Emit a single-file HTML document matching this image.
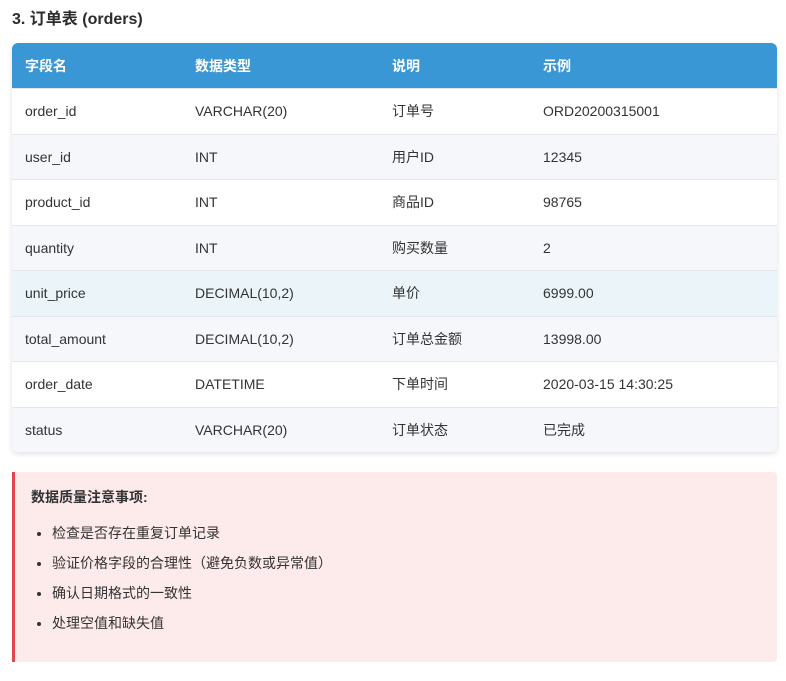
<!DOCTYPE html>
<html><head><meta charset="utf-8"><style>
body{margin:0;background:#fff;font-family:"Liberation Sans","Noto Sans CJK SC",sans-serif;color:#333;width:786px;height:681px;overflow:hidden}
h3{position:absolute;left:12px;top:9px;margin:0;font-size:16px;font-weight:bold;color:#2c2c2c;line-height:22px}
table{position:absolute;left:12px;top:43px;width:765px;border-collapse:collapse;border-radius:6px;overflow:hidden;box-shadow:0 2px 6px rgba(0,0,0,.12);font-size:14px}
th{background:#3a97d6;color:#fff;text-align:left;font-weight:bold;height:45px;padding:0 13px}
td{height:44.5px;padding:0 13px;border-top:1px solid #e3e6ea;background:#fff}
tr:nth-child(odd) td{background:#f5f7fa}
tr.hl td{background:#ebf5f9}
.note{position:absolute;left:12px;top:472px;width:762px;height:190px;background:#fdeaea;border-left:3px solid #e0464a;border-radius:0 4px 4px 0;font-size:14px}
.note b{position:absolute;left:16px;top:15px}
.note ul{position:absolute;left:0;top:51px;margin:0;padding-left:37px}
.note li{height:30px;line-height:20px}
</style></head><body>
<h3>3. 订单表 (orders)</h3>
<table>
<tr><th style="width:144px">字段名</th><th style="width:171px">数据类型</th><th style="width:125px">说明</th><th>示例</th></tr>
<tr><td>order_id</td><td>VARCHAR(20)</td><td>订单号</td><td>ORD20200315001</td></tr>
<tr><td>user_id</td><td>INT</td><td>用户ID</td><td>12345</td></tr>
<tr><td>product_id</td><td>INT</td><td>商品ID</td><td>98765</td></tr>
<tr><td>quantity</td><td>INT</td><td>购买数量</td><td>2</td></tr>
<tr class="hl"><td>unit_price</td><td>DECIMAL(10,2)</td><td>单价</td><td>6999.00</td></tr>
<tr><td>total_amount</td><td>DECIMAL(10,2)</td><td>订单总金额</td><td>13998.00</td></tr>
<tr><td>order_date</td><td>DATETIME</td><td>下单时间</td><td>2020-03-15 14:30:25</td></tr>
<tr><td>status</td><td>VARCHAR(20)</td><td>订单状态</td><td>已完成</td></tr>
</table>
<div class="note"><b>数据质量注意事项:</b>
<ul><li>检查是否存在重复订单记录</li><li>验证价格字段的合理性（避免负数或异常值）</li><li>确认日期格式的一致性</li><li>处理空值和缺失值</li></ul></div>
</body></html>
